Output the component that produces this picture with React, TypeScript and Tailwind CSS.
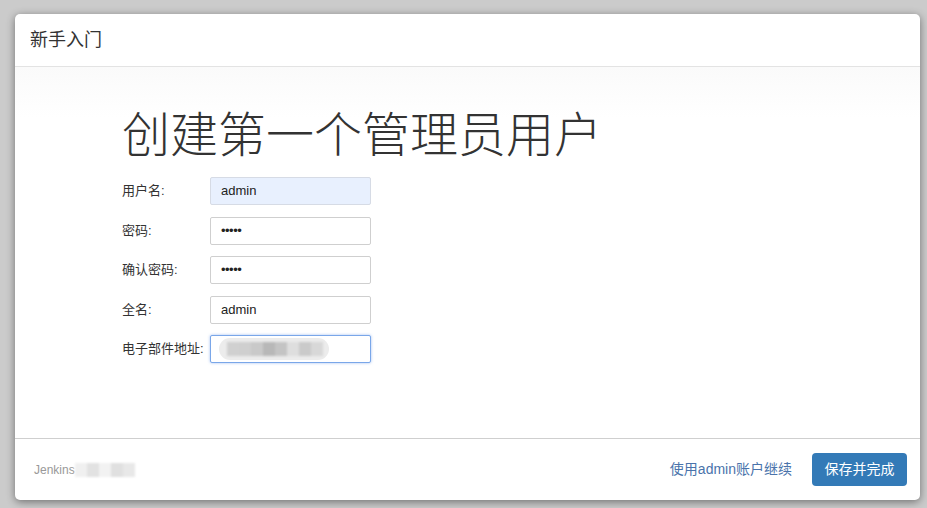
import React from "react";

const font = {
  fontFamily: '"Liberation Sans", "Noto Sans CJK SC", sans-serif',
};

function Blur({ widths }: { widths: string[] }) {
  return (
    <span className="flex items-center blur-[1px]">
      {widths.map((c, i) => (
        <span key={i} className={`h-[14px] w-[12px] ${c}`} />
      ))}
    </span>
  );
}

export default function App() {
  const rows = [
    { label: "用户名:", value: "admin", kind: "autofill" },
    { label: "密码:", value: "•••••", kind: "pw" },
    { label: "确认密码:", value: "•••••", kind: "pw" },
    { label: "全名:", value: "admin", kind: "text" },
    { label: "电子部件地址:", value: "", kind: "email" },
  ];

  return (
    <div
      className="h-[508px] w-[927px] bg-[#cbcbcb] pt-[14px] pl-[15px] pr-[7px] pb-[8px] overflow-hidden"
      style={font}
    >
      <div className="flex h-full flex-col rounded-[5px] bg-white shadow-[0_2px_8px_rgba(0,0,0,0.45)]">
        {/* header */}
        <div className="flex h-[53px] items-center border-b border-[#e3e3e3] pl-[15px]">
          <span className="text-[18px] text-[#333]">新手入门</span>
        </div>

        {/* body */}
        <div className="flex-1 bg-[linear-gradient(180deg,#fafafa_0px,#ffffff_50px)] pl-[107px] pt-[42px]">
          <h1 className="text-[48px] leading-[54px] font-light text-[#333]">
            创建第一个管理员用户
          </h1>
          <div className="mt-[14px] flex flex-col gap-[11.5px]">
            {rows.map((r) => (
              <div key={r.label} className="flex items-center">
                <span className="w-[88px] text-[13px] text-[#333]">{r.label}</span>
                {r.kind === "email" ? (
                  <div className="flex h-[28px] w-[161px] items-center rounded-[2px] border border-[#7aa7e9] bg-white pl-[8px] shadow-[0_0_3px_rgba(102,150,233,0.6)]">
                    <div className="flex h-[22px] w-[110px] items-center rounded-full bg-[#ececec] pl-[8px]">
                      <Blur
                        widths={[
                          "bg-[#d0d0d0]",
                          "bg-[#cfcfcf]",
                          "bg-[#c9c9c9]",
                          "bg-[#b8b8b8]",
                          "bg-[#c4c4c4]",
                          "bg-[#dedede]",
                          "bg-[#cacaca]",
                          "bg-[#d8d8d8]",
                        ]}
                      />
                    </div>
                  </div>
                ) : (
                  <div
                    className={`flex h-[28px] w-[161px] items-center rounded-[2px] border pl-[10px] text-[13px] text-[#222] ${
                      r.kind === "autofill"
                        ? "border-[#d6dbe5] bg-[#e8f0fe]"
                        : "border-[#cfcfcf] bg-white"
                    } ${r.kind === "pw" ? "text-[9px] tracking-[-0.5px]" : ""}`}
                  >
                    {r.value}
                  </div>
                )}
              </div>
            ))}
          </div>
        </div>

        {/* footer */}
        <div className="flex h-[62px] items-center justify-between border-t border-[#cfcfcf] pl-[19px] pr-[13px]">
          <div className="flex items-center text-[12px] text-[#999]">
            Jenkins
            <Blur
              widths={[
                "bg-[#f0f0f0]",
                "bg-[#e2e2e2]",
                "bg-[#f2f2f2]",
                "bg-[#e0e0e0]",
                "bg-[#e8e8e8]",
              ]}
            />
          </div>
          <div className="flex items-center gap-[20px]">
            <span className="text-[14px] text-[#4a73ab]">使用admin账户继续</span>
            <button className="h-[33px] w-[95px] rounded-[4px] bg-[#337ab7] text-[14px] text-white">
              保存并完成
            </button>
          </div>
        </div>
      </div>
    </div>
  );
}
